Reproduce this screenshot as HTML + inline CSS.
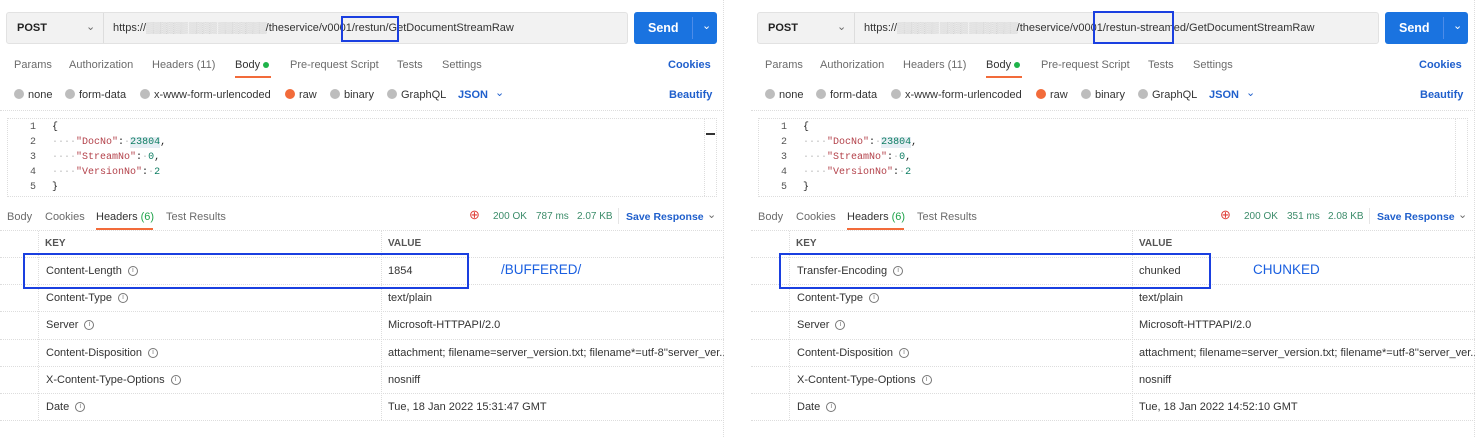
<!DOCTYPE html>
<html><head><meta charset="utf-8">
<style>
*{margin:0;padding:0;box-sizing:border-box}
body{width:1484px;height:437px;background:#fff;font-family:"Liberation Sans",sans-serif;font-size:11px;color:#333;position:relative;overflow:hidden}
.p{position:absolute;top:0;width:730px;height:437px}
.a{position:absolute;white-space:nowrap;line-height:14px}
.url{position:absolute;left:6px;top:12px;width:622px;height:32px;background:#f2f2f2;border:1px solid #e2e2e2;border-radius:3px}
.send{position:absolute;left:634px;top:12px;width:83px;height:32px;background:#1a73e0;border-radius:3px;color:#fff}
.g{color:#6b6b6b}
.rad{position:absolute;width:10px;height:10px;border-radius:50%;background:#bdbdbd;top:89px}
.blue{color:#1f5fcc;font-weight:bold}
.hl{position:absolute;border-top:1px dotted #ddd;left:0;width:724px}
.box{position:absolute;border:2px solid #1a3fe0}
.mono{font-family:"Liberation Mono",monospace;font-size:10px}
.ico{display:inline-block;width:10px;height:10px;border:1px solid #777;border-radius:50%;font-size:7px;line-height:8px;text-align:center;color:#777;vertical-align:middle;margin-left:6px}
.cut{width:336px;overflow:hidden;text-overflow:clip}
.note{color:#1a5fe0;font-size:13.5px;line-height:16px;font-weight:normal}
</style></head><body>

<!-- LEFT PANEL -->
<div class="p" style="left:0">
 <div class="url"></div>
 <div class="a" style="left:17px;top:21px;font-weight:bold;color:#222">POST</div>
 <div class="a g" style="left:86px;top:20px">⌄</div>
 <div style="position:absolute;left:103px;top:13px;width:1px;height:30px;background:#ddd"></div>
 <div class="a" style="left:113px;top:21px;color:#333">https://<span style="color:#bbb;letter-spacing:-1px">▒▒▒▒▒▒ ▒▒▒▒ ▒▒▒▒▒▒▒</span>/theservice/v0001/restun/GetDocumentStreamRaw</div>
 <div class="box" style="left:341px;top:16px;width:58px;height:26px"></div>
 <div class="send"><span class="a" style="left:14px;top:9px;font-size:12.5px;font-weight:bold">Send</span><span style="position:absolute;left:58px;top:5px;width:1px;height:22px;background:#4d8ce8"></span><span class="a" style="left:68px;top:7px">⌄</span></div>

 <div class="a g" style="left:14px;top:58px">Params</div>
 <div class="a g" style="left:69px;top:58px">Authorization</div>
 <div class="a g" style="left:152px;top:58px">Headers (11)</div>
 <div class="a" style="left:235px;top:58px;color:#333">Body</div>
 <div style="position:absolute;left:263px;top:62px;width:6px;height:6px;border-radius:50%;background:#1fb34a"></div>
 <div style="position:absolute;left:235px;top:76px;width:36px;height:2px;background:#f26b3a"></div>
 <div class="a g" style="left:290px;top:58px">Pre-request Script</div>
 <div class="a g" style="left:397px;top:58px">Tests</div>
 <div class="a g" style="left:442px;top:58px">Settings</div>
 <div class="a blue" style="left:668px;top:58px">Cookies</div>

 <div class="rad" style="left:14px"></div><div class="a" style="left:28px;top:88px">none</div>
 <div class="rad" style="left:65px"></div><div class="a" style="left:79px;top:88px">form-data</div>
 <div class="rad" style="left:140px"></div><div class="a" style="left:154px;top:88px">x-www-form-urlencoded</div>
 <div class="rad" style="left:285px;background:#f26b3a"></div><div class="a" style="left:299px;top:88px">raw</div>
 <div class="rad" style="left:330px"></div><div class="a" style="left:344px;top:88px">binary</div>
 <div class="rad" style="left:387px"></div><div class="a" style="left:401px;top:88px">GraphQL</div>
 <div class="a" style="left:458px;top:88px;color:#1f5fcc;font-weight:bold">JSON</div>
 <div class="a" style="left:495px;top:86px;color:#1f5fcc">⌄</div>
 <div class="a blue" style="left:669px;top:88px">Beautify</div>
 <div class="hl" style="top:110px"></div>

 <div style="position:absolute;left:7px;top:118px;width:710px;height:79px;border:1px dotted #ddd"></div>
 <div style="position:absolute;left:704px;top:119px;width:12px;height:77px;border-left:1px dotted #ddd"></div>
 <div style="position:absolute;left:706px;top:133px;width:9px;height:2px;background:#333"></div>
 <div class="a mono" style="left:30px;top:120px;color:#555;line-height:15px">1<br>2<br>3<br>4<br>5</div>
 <div class="a mono" style="left:52px;top:120px;line-height:15px;color:#222">{<br><span style="color:#bbb">····</span><span style="color:#b3414a">"DocNo"</span>:<span style="color:#bbb">·</span><span style="color:#0d7d62;background:#e6eef4">23804</span>,<br><span style="color:#bbb">····</span><span style="color:#b3414a">"StreamNo"</span>:<span style="color:#bbb">·</span><span style="color:#0d7d62">0</span>,<br><span style="color:#bbb">····</span><span style="color:#b3414a">"VersionNo"</span>:<span style="color:#bbb">·</span><span style="color:#0d7d62">2</span><br>}</div>

 <div class="a g" style="left:7px;top:210px">Body</div>
 <div class="a g" style="left:45px;top:210px">Cookies</div>
 <div class="a" style="left:96px;top:210px;color:#333">Headers <span style="color:#1fa34a">(6)</span></div>
 <div style="position:absolute;left:96px;top:228px;width:57px;height:2px;background:#f26b3a"></div>
 <div class="a g" style="left:166px;top:210px">Test Results</div>
 <div class="a" style="left:469px;top:208px;color:#e0403a;font-size:13px">⊕</div>
 <div class="a" style="left:493px;top:210px;color:#3c8c6a;font-size:10px">200 OK</div>
 <div class="a" style="left:536px;top:210px;color:#3c8c6a;font-size:10px">787 ms</div>
 <div class="a" style="left:577px;top:210px;color:#3c8c6a;font-size:10px">2.07 KB</div>
 <div style="position:absolute;left:618px;top:208px;width:1px;height:16px;background:#e5e5e5"></div>
 <div class="a blue" style="left:626px;top:210px;font-size:10.5px">Save Response</div>
 <div class="a g" style="left:707px;top:208px">⌄</div>

 <div class="hl" style="top:230px"></div>
 <div style="position:absolute;left:38px;top:231px;height:189px;border-left:1px dotted #ddd"></div>
 <div style="position:absolute;left:381px;top:231px;height:189px;border-left:1px dotted #ddd"></div>
 <div class="a" style="left:45px;top:237px;font-weight:bold;color:#555;font-size:10px">KEY</div>
 <div class="a" style="left:388px;top:237px;font-weight:bold;color:#555;font-size:10px">VALUE</div>
 <div class="hl" style="top:257px"></div>
 <div class="a" style="left:46px;top:264px">Content-Length<span class="ico">i</span></div><div class="a" style="left:388px;top:264px">1854</div>
 <div class="hl" style="top:284px"></div>
 <div class="a" style="left:46px;top:291px">Content-Type<span class="ico">i</span></div><div class="a" style="left:388px;top:291px">text/plain</div>
 <div class="hl" style="top:311px"></div>
 <div class="a" style="left:46px;top:318px">Server<span class="ico">i</span></div><div class="a" style="left:388px;top:318px">Microsoft-HTTPAPI/2.0</div>
 <div class="hl" style="top:339px"></div>
 <div class="a" style="left:46px;top:346px">Content-Disposition<span class="ico">i</span></div><div class="a cut" style="left:388px;top:346px">attachment; filename=server_version.txt; filename*=utf-8''server_ver...</div>
 <div class="hl" style="top:366px"></div>
 <div class="a" style="left:46px;top:373px">X-Content-Type-Options<span class="ico">i</span></div><div class="a" style="left:388px;top:373px">nosniff</div>
 <div class="hl" style="top:393px"></div>
 <div class="a" style="left:46px;top:400px">Date<span class="ico">i</span></div><div class="a" style="left:388px;top:400px">Tue, 18 Jan 2022 15:31:47 GMT</div>
 <div class="hl" style="top:420px"></div>
 <div class="box" style="left:23px;top:253px;width:446px;height:36px"></div>
 <div class="a note" style="left:501px;top:262px">/BUFFERED/</div>
 <div style="position:absolute;left:723px;top:0;height:437px;border-left:1px dotted #ddd"></div>
</div>

<!-- RIGHT PANEL -->
<div class="p" style="left:751px">
 <div class="url"></div>
 <div class="a" style="left:17px;top:21px;font-weight:bold;color:#222">POST</div>
 <div class="a g" style="left:86px;top:20px">⌄</div>
 <div style="position:absolute;left:103px;top:13px;width:1px;height:30px;background:#ddd"></div>
 <div class="a" style="left:113px;top:21px;color:#333">https://<span style="color:#bbb;letter-spacing:-1px">▒▒▒▒▒▒ ▒▒▒▒ ▒▒▒▒▒▒▒</span>/theservice/v0001/restun-streamed/GetDocumentStreamRaw</div>
 <div class="box" style="left:342px;top:11px;width:81px;height:33px"></div>
 <div class="send"><span class="a" style="left:14px;top:9px;font-size:12.5px;font-weight:bold">Send</span><span style="position:absolute;left:58px;top:5px;width:1px;height:22px;background:#4d8ce8"></span><span class="a" style="left:68px;top:7px">⌄</span></div>

 <div class="a g" style="left:14px;top:58px">Params</div>
 <div class="a g" style="left:69px;top:58px">Authorization</div>
 <div class="a g" style="left:152px;top:58px">Headers (11)</div>
 <div class="a" style="left:235px;top:58px;color:#333">Body</div>
 <div style="position:absolute;left:263px;top:62px;width:6px;height:6px;border-radius:50%;background:#1fb34a"></div>
 <div style="position:absolute;left:235px;top:76px;width:36px;height:2px;background:#f26b3a"></div>
 <div class="a g" style="left:290px;top:58px">Pre-request Script</div>
 <div class="a g" style="left:397px;top:58px">Tests</div>
 <div class="a g" style="left:442px;top:58px">Settings</div>
 <div class="a blue" style="left:668px;top:58px">Cookies</div>

 <div class="rad" style="left:14px"></div><div class="a" style="left:28px;top:88px">none</div>
 <div class="rad" style="left:65px"></div><div class="a" style="left:79px;top:88px">form-data</div>
 <div class="rad" style="left:140px"></div><div class="a" style="left:154px;top:88px">x-www-form-urlencoded</div>
 <div class="rad" style="left:285px;background:#f26b3a"></div><div class="a" style="left:299px;top:88px">raw</div>
 <div class="rad" style="left:330px"></div><div class="a" style="left:344px;top:88px">binary</div>
 <div class="rad" style="left:387px"></div><div class="a" style="left:401px;top:88px">GraphQL</div>
 <div class="a" style="left:458px;top:88px;color:#1f5fcc;font-weight:bold">JSON</div>
 <div class="a" style="left:495px;top:86px;color:#1f5fcc">⌄</div>
 <div class="a blue" style="left:669px;top:88px">Beautify</div>
 <div class="hl" style="top:110px"></div>

 <div style="position:absolute;left:7px;top:118px;width:710px;height:79px;border:1px dotted #ddd"></div>
 <div style="position:absolute;left:704px;top:119px;width:12px;height:77px;border-left:1px dotted #ddd"></div>
 <div class="a mono" style="left:30px;top:120px;color:#555;line-height:15px">1<br>2<br>3<br>4<br>5</div>
 <div class="a mono" style="left:52px;top:120px;line-height:15px;color:#222">{<br><span style="color:#bbb">····</span><span style="color:#b3414a">"DocNo"</span>:<span style="color:#bbb">·</span><span style="color:#0d7d62;background:#e6eef4">23804</span>,<br><span style="color:#bbb">····</span><span style="color:#b3414a">"StreamNo"</span>:<span style="color:#bbb">·</span><span style="color:#0d7d62">0</span>,<br><span style="color:#bbb">····</span><span style="color:#b3414a">"VersionNo"</span>:<span style="color:#bbb">·</span><span style="color:#0d7d62">2</span><br>}</div>

 <div class="a g" style="left:7px;top:210px">Body</div>
 <div class="a g" style="left:45px;top:210px">Cookies</div>
 <div class="a" style="left:96px;top:210px;color:#333">Headers <span style="color:#1fa34a">(6)</span></div>
 <div style="position:absolute;left:96px;top:228px;width:57px;height:2px;background:#f26b3a"></div>
 <div class="a g" style="left:166px;top:210px">Test Results</div>
 <div class="a" style="left:469px;top:208px;color:#e0403a;font-size:13px">⊕</div>
 <div class="a" style="left:493px;top:210px;color:#3c8c6a;font-size:10px">200 OK</div>
 <div class="a" style="left:536px;top:210px;color:#3c8c6a;font-size:10px">351 ms</div>
 <div class="a" style="left:577px;top:210px;color:#3c8c6a;font-size:10px">2.08 KB</div>
 <div style="position:absolute;left:618px;top:208px;width:1px;height:16px;background:#e5e5e5"></div>
 <div class="a blue" style="left:626px;top:210px;font-size:10.5px">Save Response</div>
 <div class="a g" style="left:707px;top:208px">⌄</div>

 <div class="hl" style="top:230px"></div>
 <div style="position:absolute;left:38px;top:231px;height:189px;border-left:1px dotted #ddd"></div>
 <div style="position:absolute;left:381px;top:231px;height:189px;border-left:1px dotted #ddd"></div>
 <div class="a" style="left:45px;top:237px;font-weight:bold;color:#555;font-size:10px">KEY</div>
 <div class="a" style="left:388px;top:237px;font-weight:bold;color:#555;font-size:10px">VALUE</div>
 <div class="hl" style="top:257px"></div>
 <div class="a" style="left:46px;top:264px">Transfer-Encoding<span class="ico">i</span></div><div class="a" style="left:388px;top:264px">chunked</div>
 <div class="hl" style="top:284px"></div>
 <div class="a" style="left:46px;top:291px">Content-Type<span class="ico">i</span></div><div class="a" style="left:388px;top:291px">text/plain</div>
 <div class="hl" style="top:311px"></div>
 <div class="a" style="left:46px;top:318px">Server<span class="ico">i</span></div><div class="a" style="left:388px;top:318px">Microsoft-HTTPAPI/2.0</div>
 <div class="hl" style="top:339px"></div>
 <div class="a" style="left:46px;top:346px">Content-Disposition<span class="ico">i</span></div><div class="a cut" style="left:388px;top:346px">attachment; filename=server_version.txt; filename*=utf-8''server_ver...</div>
 <div class="hl" style="top:366px"></div>
 <div class="a" style="left:46px;top:373px">X-Content-Type-Options<span class="ico">i</span></div><div class="a" style="left:388px;top:373px">nosniff</div>
 <div class="hl" style="top:393px"></div>
 <div class="a" style="left:46px;top:400px">Date<span class="ico">i</span></div><div class="a" style="left:388px;top:400px">Tue, 18 Jan 2022 14:52:10 GMT</div>
 <div class="hl" style="top:420px"></div>
 <div class="box" style="left:28px;top:253px;width:432px;height:36px"></div>
 <div class="a note" style="left:502px;top:262px">CHUNKED</div>
 <div style="position:absolute;left:723px;top:0;height:437px;border-left:1px dotted #ddd"></div>
</div>
</body></html>
